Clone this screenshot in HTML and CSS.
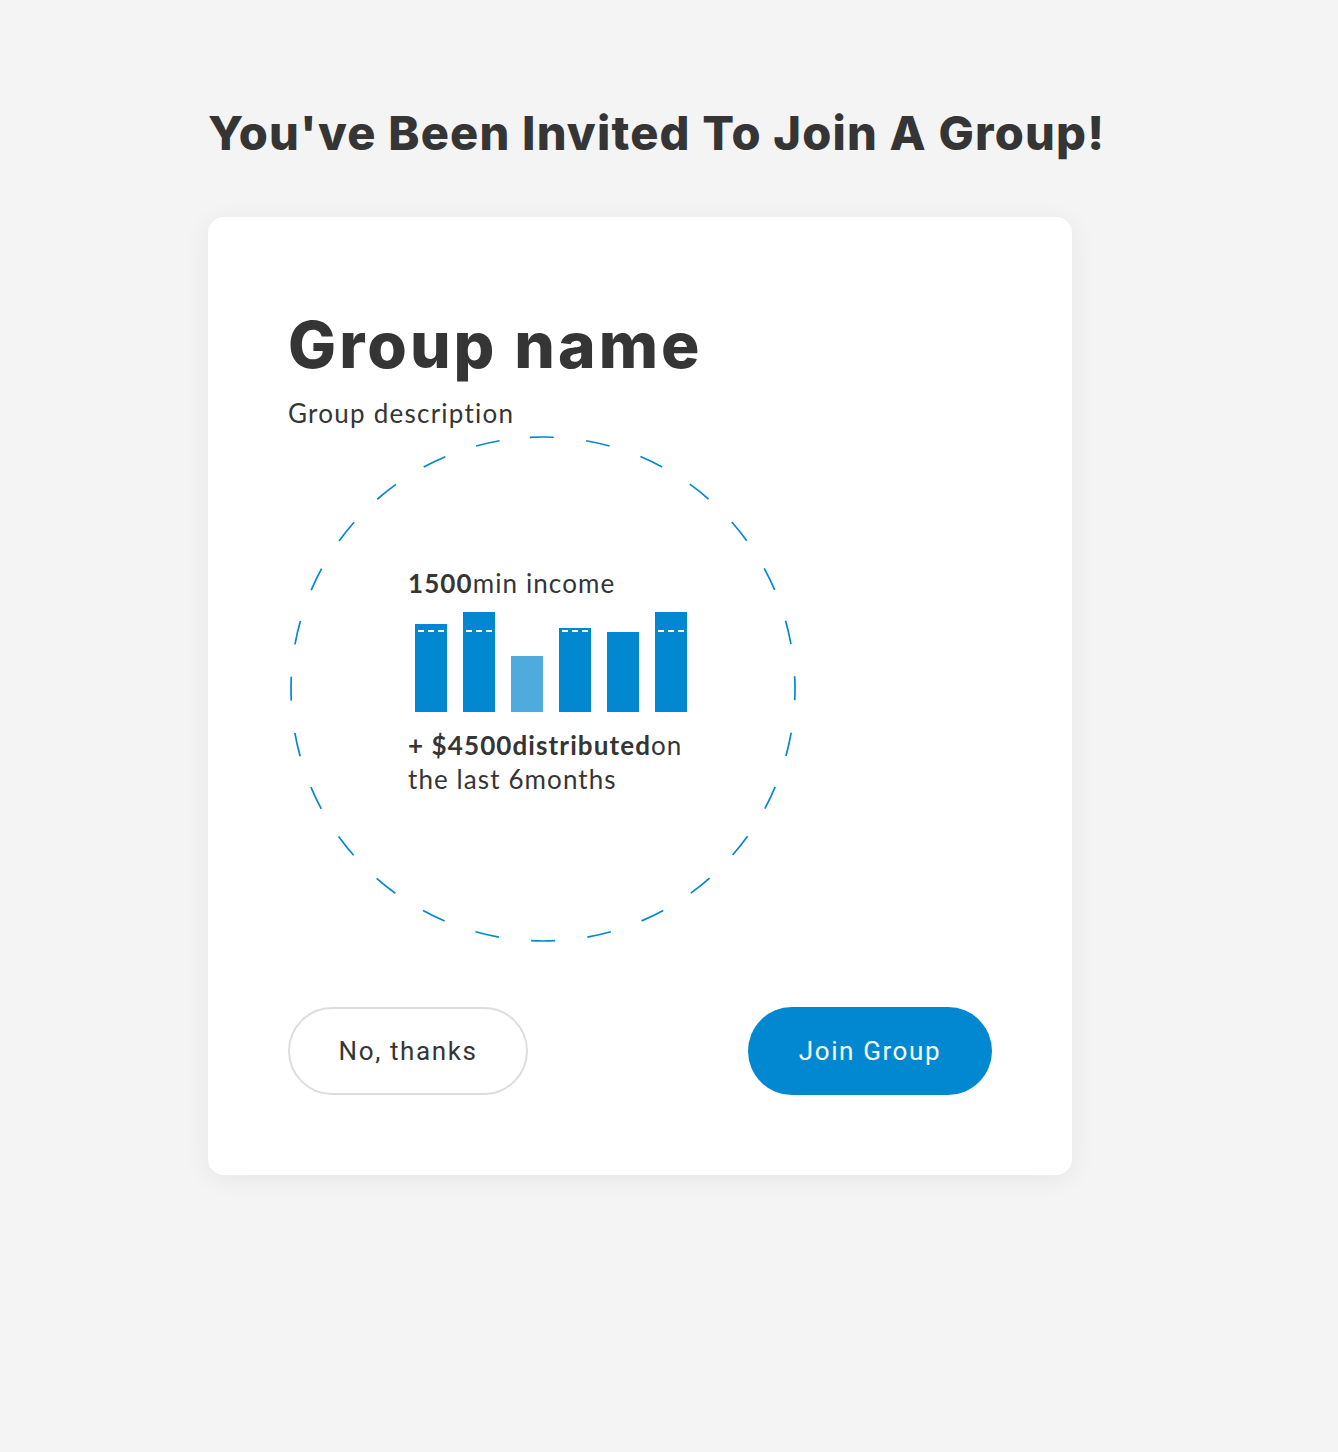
FILE: index.html
```html
<!DOCTYPE html>
<html lang="en">

<head>
  <meta charset="UTF-8" />
  <title>Group invitation</title>
  <link rel="stylesheet" href="styles.css">
</head>

<body>
  <div class="page">
    <h1 class="page-title">You've Been Invited To Join A Group!</h1>

    <div class="card">
      <h2 class="group-name">Group name</h2>
      <p class="group-desc">Group description</p>

      <div class="stats">
        <svg class="stats-ring" width="510" height="510" viewBox="0 0 510 510">
          <circle cx="255" cy="255" r="252" fill="none" stroke="#0288d1" stroke-width="1.7"
            stroke-dasharray="24 32.6" transform="rotate(-93 255 255)" />
        </svg>

        <div class="stats-body">
          <p class="stats-line"><b>1500</b>min income</p>

          <div class="chart">
            <div class="bar over" style="height: 88px"></div>
            <div class="bar over" style="height: 100px"></div>
            <div class="bar light" style="height: 56px"></div>
            <div class="bar over" style="height: 84px"></div>
            <div class="bar" style="height: 80px"></div>
            <div class="bar over" style="height: 100px"></div>
          </div>

          <p class="stats-line stats-total"><b>+ $4500distributed</b>on the last 6months</p>
        </div>
      </div>

      <div class="actions">
        <button class="btn btn-outline">No, thanks</button>
        <button class="btn btn-primary">Join Group</button>
      </div>
    </div>
  </div>
</body>

</html>
```

FILE: styles.css
```css
body {
  margin: 0;
  background: #f4f4f4;
  color: #353535;
  font-family: "Lato", "Noto Sans", sans-serif;
}

.page {
  width: 922px;
  margin: 0 auto;
  padding: 105px 0 277px;
}

.page-title {
  margin: 0 0 56px;
  font-family: "Inter", "Noto Sans", sans-serif;
  font-weight: 800;
  font-size: 47px;
  line-height: 56px;
  letter-spacing: 1.2px;
}

.card {
  width: 864px;
  box-sizing: border-box;
  padding: 80px;
  background: white;
  border-radius: 16px;
  box-shadow: 0 4px 28px rgba(0, 0, 0, 0.06);
}

.group-name {
  margin: 12px 0 0;
  font-family: "Inter", "Noto Sans", sans-serif;
  font-weight: 800;
  font-size: 64px;
  line-height: 72px;
  letter-spacing: 3px;
}

.group-desc {
  margin: 18px 0 0;
  font-size: 26px;
  line-height: 29px;
  letter-spacing: 1.25px;
}

.stats {
  position: relative;
  width: 510px;
  height: 510px;
  margin-top: 6px;
  box-sizing: border-box;
  padding: 132px 0 0 120px;
}

.stats-ring {
  position: absolute;
  top: 0;
  left: 0;
}

.stats-body {
  position: relative;
  width: 288px;
}

.stats-line {
  margin: 0;
  font-size: 26px;
  line-height: 34px;
  letter-spacing: 1.1px;
}

.stats-line b {
  font-weight: 700;
}

.chart {
  display: flex;
  align-items: flex-end;
  gap: 16px;
  height: 100px;
  margin: 12px 0 16px 7px;
}

.bar {
  position: relative;
  width: 32px;
  background: #0288d1;
}

.bar.light {
  background: #4fabdd;
}

.bar.over::after {
  content: "";
  position: absolute;
  left: 3px;
  width: 26px;
  bottom: 80px;
  height: 2px;
  background: repeating-linear-gradient(to right, #fff 0 6px, transparent 6px 10px);
}

.actions {
  display: flex;
  justify-content: space-between;
  margin-top: 63px;
}

.btn {
  height: 88px;
  border-radius: 44px;
  font-family: "Roboto", "Noto Sans", sans-serif;
  font-size: 26px;
  letter-spacing: 1.6px;
  cursor: pointer;
}

.btn-outline {
  width: 240px;
  background: white;
  color: #353535;
  border: 2px solid #dddddd;
}

.btn-primary {
  width: 244px;
  background: #0288d1;
  color: white;
  border: none;
}
```
